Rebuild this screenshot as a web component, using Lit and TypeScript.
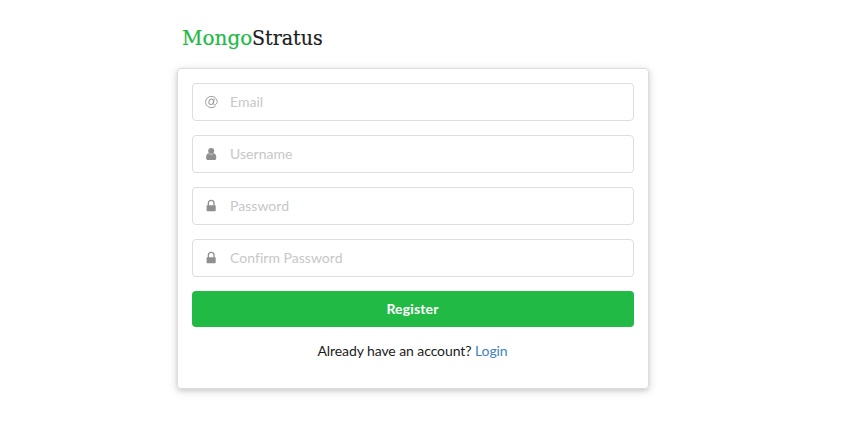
import { LitElement, html, css, svg } from "lit";
import { customElement } from "lit/decorators.js";

const icons = {
  at: svg`<g transform="translate(.4 .1)" fill="none" stroke="#999" stroke-width=".95" stroke-linecap="round"><path d="M11.100 11.100A5.900 5.700 0 1 1 12.900 6.400C12.900 8.600 11.500 9.500 10.200 9.500 9.100 9.500 8.700 8.900 8.900 8L9.800 3.900"/><ellipse cx="6.800" cy="6.700" rx="2.200" ry="2.800" transform="rotate(22 6.800 6.700)"/></g>`,
  user: svg`<path d="M7.200 1a3 3 0 0 1 0 6 3 3 0 0 1 0-6zM4.600 6.300C2.800 6.500 2.100 8.300 2.100 10.700 2.100 12.200 2.900 13 4.100 13H10.300C11.500 13 12.300 12.200 12.300 10.700 12.300 8.300 11.600 6.500 9.800 6.300 8.300 7.900 6.100 7.900 4.600 6.300z"/>`,
  lock: svg`<path fill-rule="evenodd" d="M3.700 6.300V4.300a3.500 3.500 0 0 1 7 0V6.300h.3c.4 0 .7.300.7.700v4.500c0 .4-.3.700-.7.700H3.300c-.4 0-.7-.3-.7-.7V7c0-.4.3-.7.7-.7zM5 6.300h4.400V4.300a2.200 2.200 0 0 0-4.400 0z"/>`,
};

@customElement("app-root")
export class AppRoot extends LitElement {
  static styles = css`
    :host { display: block; min-height: 435px; background: #fff; font: 14px/20px Lato, "Liberation Sans", sans-serif; color: rgba(0,0,0,.87); }
    * { box-sizing: border-box; }
    .page { width: 472px; margin-left: 177px; padding-top: 24px; }
    .brand { display: flex; margin: 0 0 0 5px; height: 44px; font: 400 20px/28px "DejaVu Serif", serif; color: #1b1c1d; -webkit-text-stroke: .2px currentColor; }
    .mongo { color: #21ba45; }
    .stratus { transform: scaleX(.95); transform-origin: left; }
    .card { height: 321px; padding: 14px; border: 1px solid #dcdcdd; border-radius: 4px; box-shadow: 0 2px 4px rgba(34,36,38,.12), 0 2px 10px rgba(34,36,38,.15); display: flex; flex-direction: column; gap: 14px; }
    .field { display: flex; align-items: center; height: 38px; flex: none; border: 1px solid #dededf; border-radius: 4px; color: #c7c7c7; padding-left: 11px; letter-spacing: .03px; }
    svg { width: 14px; height: 14px; fill: #8f8f8f; margin-right: 12px; overflow: visible; }
    .button { height: 36px; padding: 0 1px 2px 0; border: 0; border-radius: 4px; background: #21ba45; color: #fff; font: 700 14px Lato, sans-serif; letter-spacing: .15px; }
    .foot { text-align: center; color: #1b1b1b; letter-spacing: -.08px; padding-right: 1px; }
    .foot a { color: #4183c4; }
  `;
  field(icon: keyof typeof icons, label: string) {
    return html`<label class="field"><svg viewBox="0 0 14 14">${icons[icon]}</svg>${label}</label>`;
  }
  render() {
    return html`<main class="page">
      <h1 class="brand"><span class="mongo">Mongo</span><span class="stratus">Stratus</span></h1>
      <form class="card">
        ${this.field("at", "Email")}${this.field("user", "Username")}${this.field("lock", "Password")}${this.field("lock", "Confirm Password")}
        <button class="button" type="button">Register</button>
        <div class="foot">Already have an account? <a>Login</a></div>
      </form>
    </main>`;
  }
}
